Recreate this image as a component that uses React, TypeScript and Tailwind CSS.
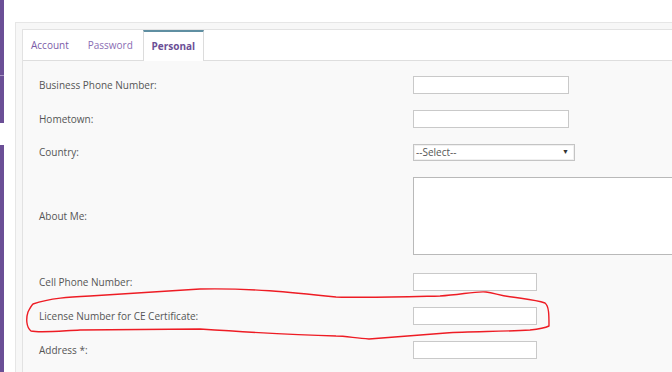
const font = { fontFamily: '"Open Sans", "Liberation Sans", sans-serif' };

function Row({
  label,
  top,
  children,
}: {
  label: string;
  top: string;
  children: React.ReactNode;
}) {
  return (
    <div className={`flex items-center ${top}`}>
      <div className="w-[390px] shrink-0 pl-[16px] text-[10px] text-[#555]">{label}</div>
      {children}
    </div>
  );
}

const inputCls = "h-[18px] border border-[#c9c9c9] bg-white";

export default function App() {
  return (
    <div className="relative flex h-[372px] w-[672px] overflow-hidden bg-white" style={font}>
      {/* side nav edge */}
      <div className="flex w-[4px] shrink-0 flex-col">
        <div className="h-[75px] bg-[#6b4f96]" />
        <div className="h-px bg-[#a996c4]" />
        <div className="h-[47px] bg-[#6b4f96]" />
        <div className="h-[22px] bg-white" />
        <div className="flex-1 bg-[#6b4f96]" />
      </div>

      {/* panel */}
      <div className="ml-[11px] mt-[22px] flex-1 border-l border-t border-[#e6e6e6] bg-[#f7f7f7] pl-[6px] pt-[6px]">
        <div className="h-full border-l border-t border-[#e2e2e2] bg-[#f9f9f9]">
          {/* tabs */}
          <div className="flex h-[31px] items-end border-b border-[#dedede] bg-white text-[10px]">
            <div className="flex h-[30px] items-center pl-[8px] pr-[19px] text-[#7b5ca8]">Account</div>
            <div className="flex h-[30px] items-center pr-[10px] text-[#8a6db3]">Password</div>
            <div className="-mb-px flex h-[31px] w-[61px] items-center justify-center border-x border-t-2 border-x-[#dcdcdc] border-t-[#5f8fa2] bg-white font-bold text-[#6b4f96]">
              Personal
            </div>
          </div>

          {/* form */}
          <div className="flex flex-col pt-[15px]">
            <Row label="Business Phone Number:" top="">
              <div className={`${inputCls} w-[156px]`} />
            </Row>
            <Row label="Hometown:" top="mt-[16px]">
              <div className={`${inputCls} w-[156px]`} />
            </Row>
            <Row label="Country:" top="mt-[16px]">
              <div className="flex h-[17px] w-[162px] items-center justify-between border border-[#c4c4c4] bg-white pl-[2px] pr-[5px] text-[10px] text-[#555] shadow-[inset_0_0_0_1px_#f0f0f0]">
                <span>--Select--</span>
                <span className="text-[7px] text-[#333]">▼</span>
              </div>
            </Row>
            <Row label="About Me:" top="mt-[16px]">
              <div className="h-[78px] flex-1 border border-r-0 border-[#b9b9b9] bg-white" />
            </Row>
            <Row label="Cell Phone Number:" top="mt-[18px]">
              <div className={`${inputCls} w-[124px]`} />
            </Row>
            <Row label="License Number for CE Certificate:" top="mt-[16px]">
              <div className={`${inputCls} w-[124px]`} />
            </Row>
            <Row label="Address *:" top="mt-[16px]">
              <div className={`${inputCls} w-[124px]`} />
            </Row>
          </div>
        </div>
      </div>

      {/* hand-drawn red marker loop */}
      <svg
        className="pointer-events-none absolute inset-0"
        width="672"
        height="372"
        viewBox="0 0 672 372"
      >
        <path
          d="M33 304 C50 298 70 297 90 296 C120 294 150 292 200 289 C250 288 290 292 336 297 C370 298 400 297 440 296 C460 295 475 291 486 292 C495 293 500 296 512 297 C525 299 536 300 545 303 C549 306 549 315 549 326 C545 328 540 329 530 330 C500 332 470 331 446 333 C420 335 395 337 369 339 C355 338 345 336 336 336 C300 335 260 333 200 329 C160 329 120 330 80 330 C60 331 40 333 31 331 C26 327 26 318 28 312 C30 308 31 306 33 304 Z"
          fill="none"
          stroke="#ee1c24"
          strokeWidth="1.4"
          strokeLinejoin="round"
        />
      </svg>
    </div>
  );
}
